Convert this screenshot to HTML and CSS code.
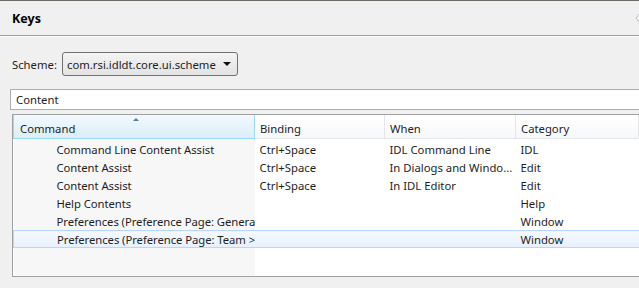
FILE: index.html
```html
<!DOCTYPE html>
<html lang="en">
<head>
  <meta charset="UTF-8">
  <meta name="viewport" content="width=device-width, initial-scale=1.0">
  <title>Keys</title>
  <link rel="stylesheet" href="styles.css">
</head>
<body>
  <div class="page-header">
    <h2>Keys</h2>
    <svg class="header-icon" width="8" height="10" viewBox="0 0 8 10">
      <path d="M4 1 L7 5 L4 9 L1 5 Z" fill="none" stroke="#c4c4c4" stroke-width="1"/>
    </svg>
  </div>

  <div class="content">
    <div class="scheme-row">
      <label for="scheme">Scheme:</label>
      <div class="combo" id="scheme">
        <span>com.rsi.idldt.core.ui.scheme</span>
        <span class="combo-arrow"></span>
      </div>
    </div>

    <div class="filter">Content</div>

    <div class="table-box">
      <table class="keys-table">
        <colgroup>
          <col class="col-command">
          <col class="col-binding">
          <col class="col-when">
          <col>
        </colgroup>
        <thead>
          <tr>
            <th class="sorted">Command<span class="sort-arrow"></span></th>
            <th>Binding</th>
            <th>When</th>
            <th>Category</th>
          </tr>
        </thead>
        <tbody>
          <tr>
            <td class="cmd">Command Line Content Assist</td>
            <td>Ctrl+Space</td>
            <td>IDL Command Line</td>
            <td>IDL</td>
          </tr>
          <tr>
            <td class="cmd">Content Assist</td>
            <td>Ctrl+Space</td>
            <td>In Dialogs and Windo...</td>
            <td>Edit</td>
          </tr>
          <tr>
            <td class="cmd">Content Assist</td>
            <td>Ctrl+Space</td>
            <td>In IDL Editor</td>
            <td>Edit</td>
          </tr>
          <tr>
            <td class="cmd">Help Contents</td>
            <td></td>
            <td></td>
            <td>Help</td>
          </tr>
          <tr>
            <td class="cmd">Preferences (Preference Page: Genera</td>
            <td></td>
            <td></td>
            <td>Window</td>
          </tr>
          <tr class="selected">
            <td class="cmd">Preferences (Preference Page: Team &gt;</td>
            <td></td>
            <td></td>
            <td>Window</td>
          </tr>
          <tr class="filler">
            <td class="cmd"></td>
            <td></td>
            <td></td>
            <td></td>
          </tr>
        </tbody>
      </table>
    </div>
  </div>
</body>
</html>
```

FILE: styles.css
```css
body {
  font-family: "Noto Sans", "Open Sans", sans-serif;
  font-size: 11.3px;
  color: #1e1e1e;
  background-color: #f0f0f0;
  margin: 0;
  padding: 0;
  overflow: hidden;
  height: 288px;
}
.page-header {
  display: flex;
  align-items: center;
  justify-content: space-between;
  height: 34px;
  border-top: 1px solid #6f6b67;
  border-bottom: 1px solid #a0a0a0;
  padding-left: 12px;
}
.page-header h2 {
  margin: 0;
  font-size: 12.5px;
  font-weight: bold;
  color: #000;
}
.header-icon {
  margin-right: -4px;
}
.content {
  border-top: 1px solid #fbfbfb;
  padding: 15px 0 0 12px;
}
.scheme-row {
  display: flex;
  align-items: center;
  gap: 5px;
}
.combo {
  display: flex;
  align-items: center;
  justify-content: space-between;
  width: 164px;
  height: 22px;
  padding: 0 6px 0 4px;
  border: 1px solid #707070;
  border-radius: 3px;
  background: linear-gradient(#f4f4f4, #e3e3e3);
}
.combo-arrow {
  width: 0;
  height: 0;
  border-left: 4px solid transparent;
  border-right: 4px solid transparent;
  border-top: 4px solid #111;
}
.filter {
  margin-top: 13px;
  margin-left: -2px;
  height: 19px;
  line-height: 19px;
  padding-left: 5px;
  background: #fff;
  border: 1px solid #abadb3;
  border-right: none;
}
.table-box {
  margin-top: 4px;
  height: 161px;
  border: 1px solid #a0a0a0;
  border-right: none;
  background: #fff;
  overflow: hidden;
}
.keys-table {
  width: 100%;
  height: 100%;
  border-collapse: collapse;
  table-layout: fixed;
}
.col-command {
  width: 241px;
}
.col-binding {
  width: 130px;
}
.col-when {
  width: 131px;
}
.keys-table th {
  position: relative;
  height: 20px;
  padding: 3px 0 0 5px;
  text-align: left;
  font-weight: normal;
  background: linear-gradient(#ffffff, #f7f8fa);
  border-right: 1px solid #e3e5e8;
  border-bottom: 1px solid #e3e5e8;
}
.keys-table th.sorted {
  padding-left: 6px;
  background: linear-gradient(#f2f9fd, #daedf8);
  border-left: 1px solid #96d9f9;
  border-right: 1px solid #96d9f9;
  border-bottom: 1px solid #96d9f9;
}
.sort-arrow {
  position: absolute;
  top: 3px;
  left: 119px;
  width: 0;
  height: 0;
  border-left: 3px solid transparent;
  border-right: 3px solid transparent;
  border-bottom: 3px solid #5b7d9a;
}
.keys-table td {
  height: 18px;
  padding: 0 0 0 5px;
  white-space: nowrap;
  overflow: hidden;
}
.keys-table td.cmd {
  padding-left: 43px;
  letter-spacing: -0.06px;
  background: #f7f7f7;
}
.keys-table tbody tr:first-child td {
  padding-top: 1px;
}
.keys-table tr.selected td {
  background: linear-gradient(#f5f9fe, #e6f1fd);
  border-top: 1px solid #b8d6fb;
  border-bottom: 1px solid #b8d6fb;
  height: 16px;
}
.keys-table tr.selected td.cmd {
  border-left: 1px solid #b8d6fb;
}
.keys-table tr.filler td {
  height: auto;
}
```
